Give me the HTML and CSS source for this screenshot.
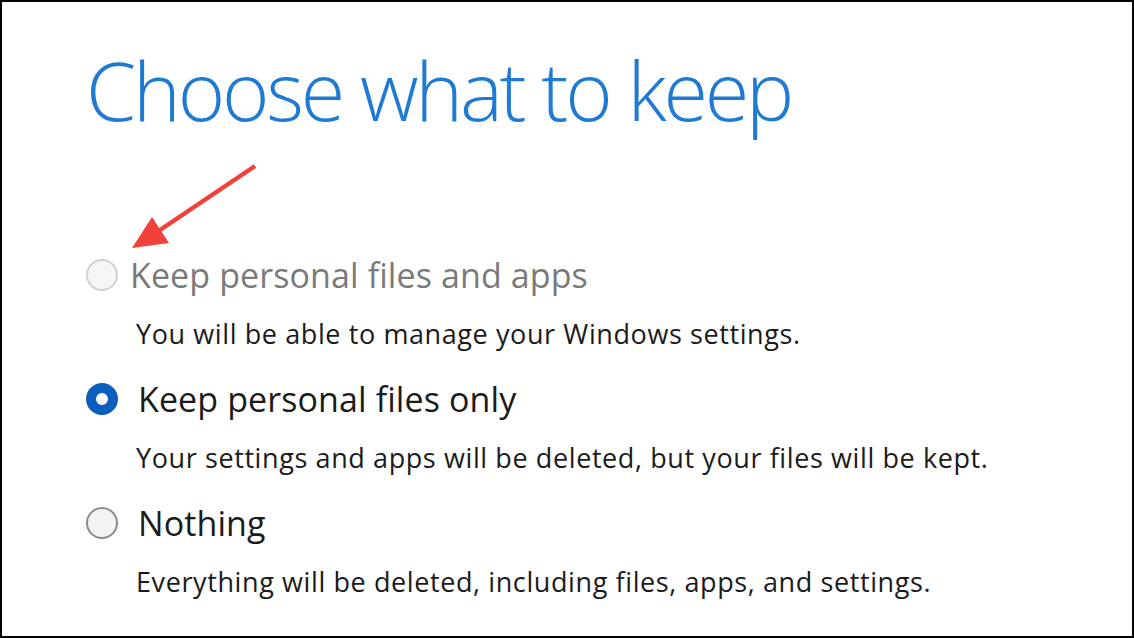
FILE: index.html
```html
<!DOCTYPE html>
<html lang="en">
<head>
<meta charset="utf-8">
<title>Choose what to keep</title>
<link rel="stylesheet" href="styles.css">
</head>
<body>
<div class="frame">
  <h1 class="title">Choose what to keep</h1>
  <div class="options">
    <div class="option option-disabled">
      <span class="radio radio-disabled"></span>
      <span class="label">Keep personal files and apps</span>
      <span class="desc">You will be able to manage your Windows settings.</span>
    </div>
    <div class="option">
      <span class="radio radio-checked"></span>
      <span class="label">Keep personal files only</span>
      <span class="desc">Your settings and apps will be deleted, but your files will be kept.</span>
    </div>
    <div class="option">
      <span class="radio"></span>
      <span class="label">Nothing</span>
      <span class="desc">Everything will be deleted, including files, apps, and settings.</span>
    </div>
  </div>
  <svg class="arrow" width="140" height="100" viewBox="0 0 140 100" aria-hidden="true">
    <line x1="133" y1="11" x2="35" y2="77" stroke="#f2403a" stroke-width="4.5" stroke-linecap="butt"/>
    <polygon points="10,93 30,62 47,88" fill="#f2403a"/>
  </svg>
</div>
</body>
</html>
```

FILE: styles.css
```css
html, body {
  margin: 0;
  padding: 0;
  background: #ffffff;
}

.frame {
  position: relative;
  box-sizing: border-box;
  width: 1134px;
  height: 638px;
  border: 2px solid #000000;
  padding: 46px 0 0 84px;
  display: flex;
  flex-direction: column;
  font-family: "Open Sans", "Noto Sans", sans-serif;
  overflow: hidden;
}

.title {
  margin: 0;
  font-size: 81px;
  line-height: 84px;
  font-weight: 300;
  color: #1f7ad3;
  letter-spacing: -3.2px;
}

.options {
  margin-top: 123px;
  display: flex;
  flex-direction: column;
  gap: 29px;
}

.option {
  display: grid;
  grid-template-columns: 32px 1fr;
  column-gap: 20px;
  row-gap: 23px;
  align-items: center;
}

.option-disabled {
  column-gap: 12px;
}

.label {
  font-size: 34px;
  line-height: 40px;
  color: #1b1b1b;
  letter-spacing: 0.1px;
  white-space: nowrap;
}

.option-disabled .label {
  color: #7a7a7a;
}

.desc {
  grid-column: 2;
  font-size: 27px;
  line-height: 32px;
  color: #1b1b1b;
  margin-left: -2px;
  letter-spacing: 0.6px;
  white-space: nowrap;
}

.option-disabled .desc {
  margin-left: 6px;
}

.radio {
  box-sizing: border-box;
  width: 32px;
  height: 32px;
  border-radius: 50%;
  border: 2px solid #8a8a8a;
  background: #f3f3f3;
}

.radio-disabled {
  border-color: #d0d0d0;
  background: #f6f6f6;
}

.radio-checked {
  border: 10px solid #0a5fbd;
  background: #ffffff;
}

.arrow {
  position: absolute;
  left: 120px;
  top: 153px;
}
```
